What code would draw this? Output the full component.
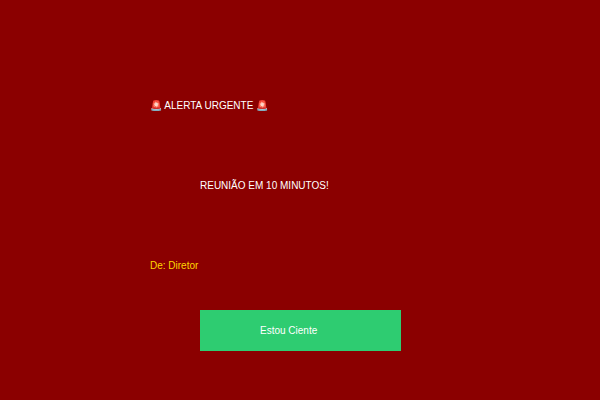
export default function App() {
  return (
    <div className="w-[600px] h-[400px] bg-[#8b0000] pt-[100px] pl-[150px] font-['Liberation_Sans',sans-serif] text-[10px] leading-[12px] text-white">
      <div className="h-[12px]">🚨 ALERTA URGENTE 🚨</div>
      <div className="mt-[68px] ml-[50px] h-[12px]">REUNIÃO EM 10 MINUTOS!</div>
      <div className="mt-[68px] h-[12px] text-[#ffd700]">De: Diretor</div>
      <button className="mt-[38px] ml-[50px] w-[201px] h-[41px] bg-[#2ecc71] text-white text-[10px] pl-[60px] text-left">
        Estou Ciente
      </button>
    </div>
  );
}
